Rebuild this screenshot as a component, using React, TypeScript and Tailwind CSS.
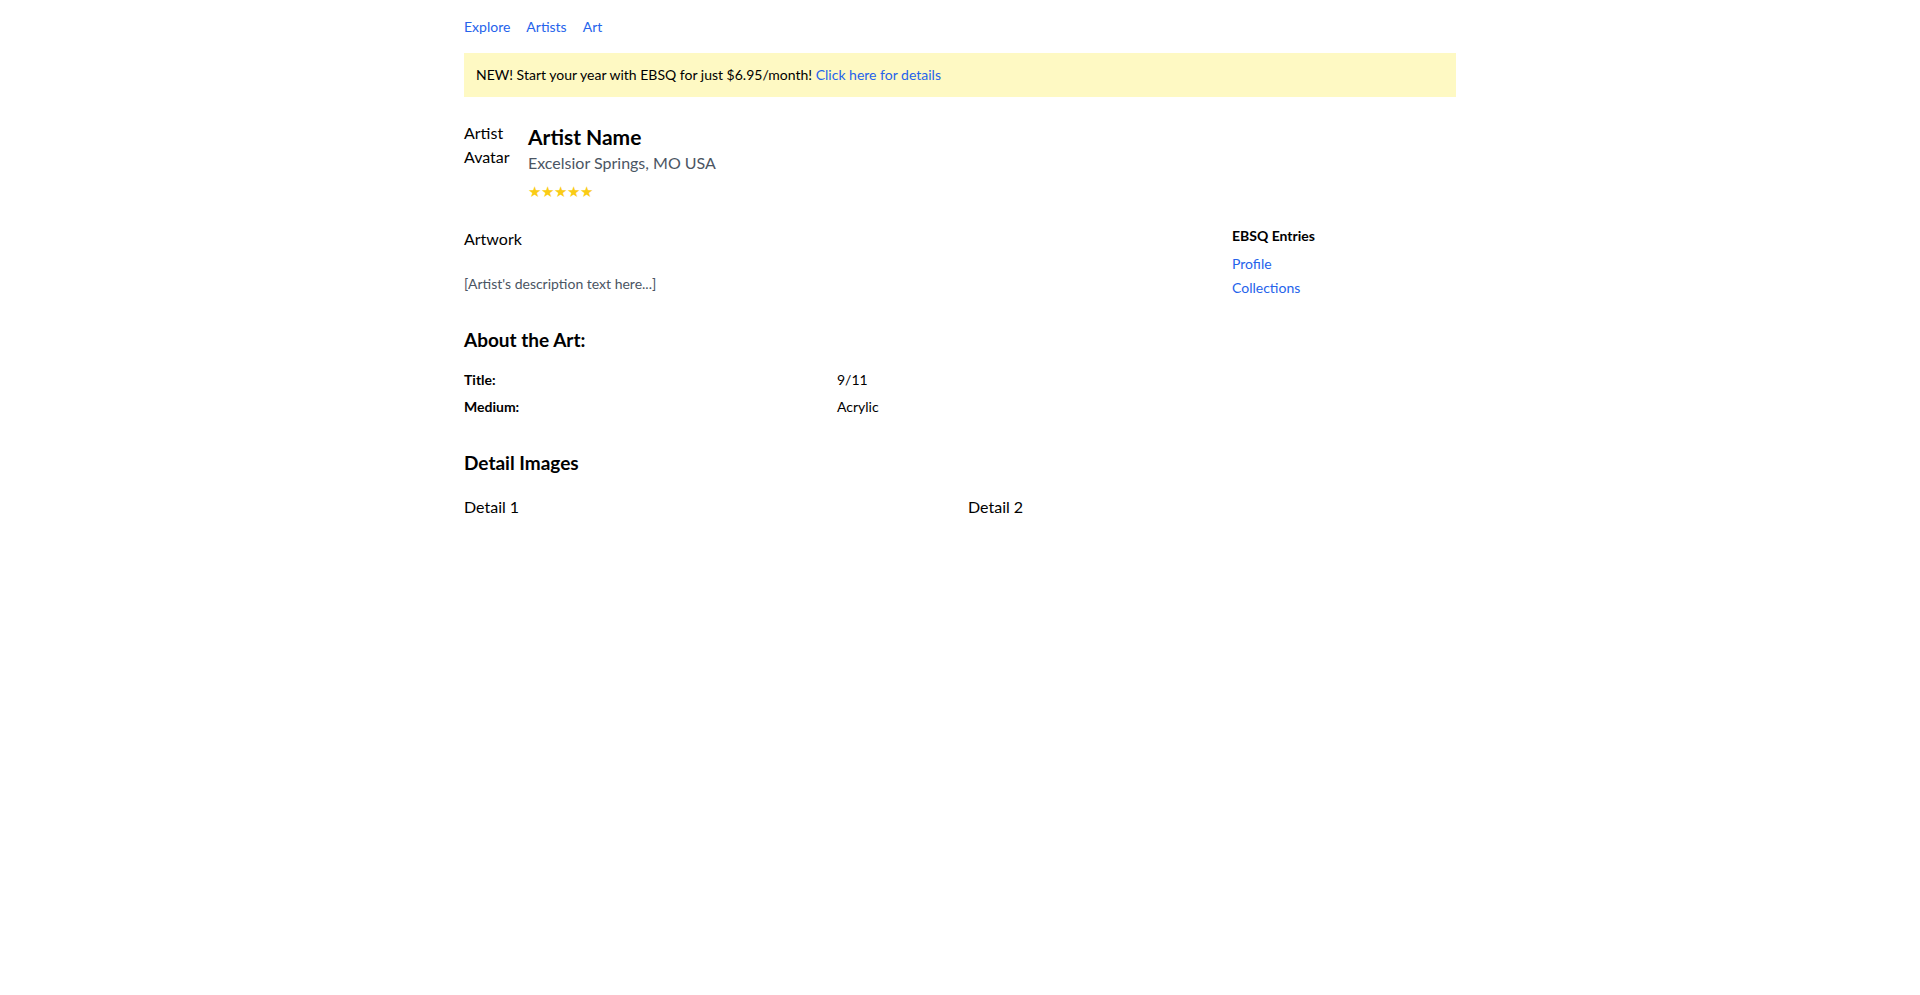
import React from "react";

export default function App() {
  const navItems = ["Explore", "Artists", "Art"];

  return (
    <div className="min-h-screen bg-white text-black font-['Segoe_UI',Lato,sans-serif]">
      <div className="max-w-5xl mx-auto px-4 pt-[17px]">

        {/* nav */}
        <nav className="flex gap-4 text-sm mb-4">
          {navItems.map((n) => (
            <a key={n} href="#" className="text-[#2563eb]">
              {n}
            </a>
          ))}
        </nav>

        {/* promo banner */}
        <div className="bg-[#fef9c3] px-3 py-3 text-sm mb-6">
          NEW! Start your year with EBSQ for just $6.95/month!{" "}
          <a href="#" className="text-[#2563eb]">Click here for details</a>
        </div>

        {/* artist header */}
        <div className="flex gap-4 mb-6">
          <div className="w-12 h-12 text-base leading-6">Artist Avatar</div>
          <div className="pt-0.5">
            <h1 className="text-[21px] font-bold leading-7">Artist Name</h1>
            <p className="text-base text-[#4b5563]">Excelsior Springs, MO USA</p>
            <div className="text-[15px] text-[#facc15] mt-1.5 leading-5">★★★★★</div>
          </div>
        </div>

        {/* artwork + sidebar */}
        <div className="flex gap-8">
          <div className="flex-1">
            <div className="text-base mb-[23px] mt-0.5">Artwork</div>
            <p className="text-sm text-[#4b5563]">[Artist's description text here...]</p>
          </div>
          <aside className="w-56 text-sm pt-px">
            <h3 className="font-bold mb-2">EBSQ Entries</h3>
            <ul className="space-y-1">
              <li><a href="#" className="text-[#2563eb]">Profile</a></li>
              <li><a href="#" className="text-[#2563eb]">Collections</a></li>
            </ul>
          </aside>
        </div>

        {/* about */}
        <section className="mt-7">
          <h2 className="text-[19px] leading-7 font-bold mb-4">About the Art:</h2>
          <div className="grid grid-cols-[373px_1fr] gap-y-[7px] text-sm">
            <div className="font-bold">Title:</div>
            <div>9/11</div>
            <div className="font-bold">Medium:</div>
            <div>Acrylic</div>
          </div>
        </section>

        {/* detail images */}
        <section className="mt-8">
          <h2 className="text-[19px] leading-7 font-bold mb-[18px]">Detail Images</h2>
          <div className="grid grid-cols-2 gap-4">
            <div>Detail 1</div>
            <div>Detail 2</div>
          </div>
        </section>

      </div>
    </div>
  );
}
